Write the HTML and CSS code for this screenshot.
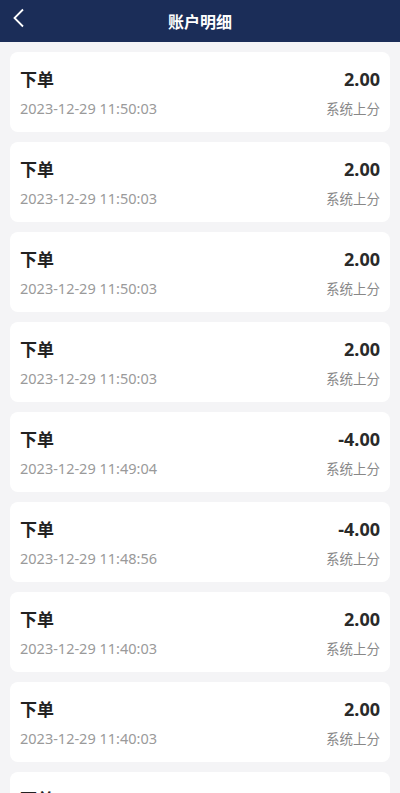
FILE: index.html
```html
<!DOCTYPE html>
<html lang="zh">
<head>
<meta charset="utf-8">
<link rel="stylesheet" href="styles.css">
</head>
<body>
<header class="nav">
  <span class="back"><svg width="14" height="22" viewBox="0 0 14 22"><path d="M12 2.5 L3.5 11 L12 19.5" fill="none" stroke="#fff" stroke-width="1.8"/></svg></span>
  <h1 class="title">账户明细</h1>
</header>
<main class="list">
  <div class="card"><div class="row"><span class="name">下单</span><span class="amt">2.00</span></div><div class="row"><span class="time">2023-12-29 11:50:03</span><span class="type">系统上分</span></div></div>
  <div class="card"><div class="row"><span class="name">下单</span><span class="amt">2.00</span></div><div class="row"><span class="time">2023-12-29 11:50:03</span><span class="type">系统上分</span></div></div>
  <div class="card"><div class="row"><span class="name">下单</span><span class="amt">2.00</span></div><div class="row"><span class="time">2023-12-29 11:50:03</span><span class="type">系统上分</span></div></div>
  <div class="card"><div class="row"><span class="name">下单</span><span class="amt">2.00</span></div><div class="row"><span class="time">2023-12-29 11:50:03</span><span class="type">系统上分</span></div></div>
  <div class="card"><div class="row"><span class="name">下单</span><span class="amt">-4.00</span></div><div class="row"><span class="time">2023-12-29 11:49:04</span><span class="type">系统上分</span></div></div>
  <div class="card"><div class="row"><span class="name">下单</span><span class="amt">-4.00</span></div><div class="row"><span class="time">2023-12-29 11:48:56</span><span class="type">系统上分</span></div></div>
  <div class="card"><div class="row"><span class="name">下单</span><span class="amt">2.00</span></div><div class="row"><span class="time">2023-12-29 11:40:03</span><span class="type">系统上分</span></div></div>
  <div class="card"><div class="row"><span class="name">下单</span><span class="amt">2.00</span></div><div class="row"><span class="time">2023-12-29 11:40:03</span><span class="type">系统上分</span></div></div>
  <div class="card"><div class="row"><span class="name">下单</span><span class="amt">2.00</span></div><div class="row"><span class="time">2023-12-29 11:40:03</span><span class="type">系统上分</span></div></div>
</main>
</body>
</html>
```
FILE: styles.css
```css
* { box-sizing: border-box; }
html, body { margin: 0; padding: 0; }
body {
  background: #f4f4f6;
  font-family: "Noto Sans", "Noto Sans CJK SC", sans-serif;
  width: 400px;
  height: 793px;
  overflow: hidden;
}
.nav {
  height: 42px;
  background: #1b2d58;
  position: relative;
  display: flex;
  align-items: center;
  justify-content: center;
}
.back {
  position: absolute;
  left: 11px;
  top: 7px;
  display: flex;
}
.title {
  margin: 0;
  color: #fff;
  font-size: 16px;
  font-weight: 700;
  line-height: 42px;
  font-family: "Noto Sans CJK SC", sans-serif;
}
.list {
  padding: 10px 10px 0;
  display: flex;
  flex-direction: column;
  gap: 10px;
}
.card {
  background: #fff;
  border-radius: 8px;
  height: 80px;
  flex-shrink: 0;
  padding: 16px 10px 14px;
  display: flex;
  flex-direction: column;
  gap: 8px;
}
.row {
  display: flex;
  justify-content: space-between;
  align-items: center;
}
.name {
  font-family: "Noto Sans CJK SC", sans-serif;
  font-size: 17px;
  font-weight: 700;
  color: #222;
  line-height: 22px;
}
.amt {
  font-size: 18px;
  font-weight: 700;
  color: #2a2a2a;
  line-height: 22px;
}
.time {
  font-size: 14.5px;
  color: #9a9a9a;
  line-height: 20px;
}
.type {
  font-family: "Noto Sans CJK SC", sans-serif;
  font-size: 13.5px;
  color: #888;
  line-height: 20px;
}
```
